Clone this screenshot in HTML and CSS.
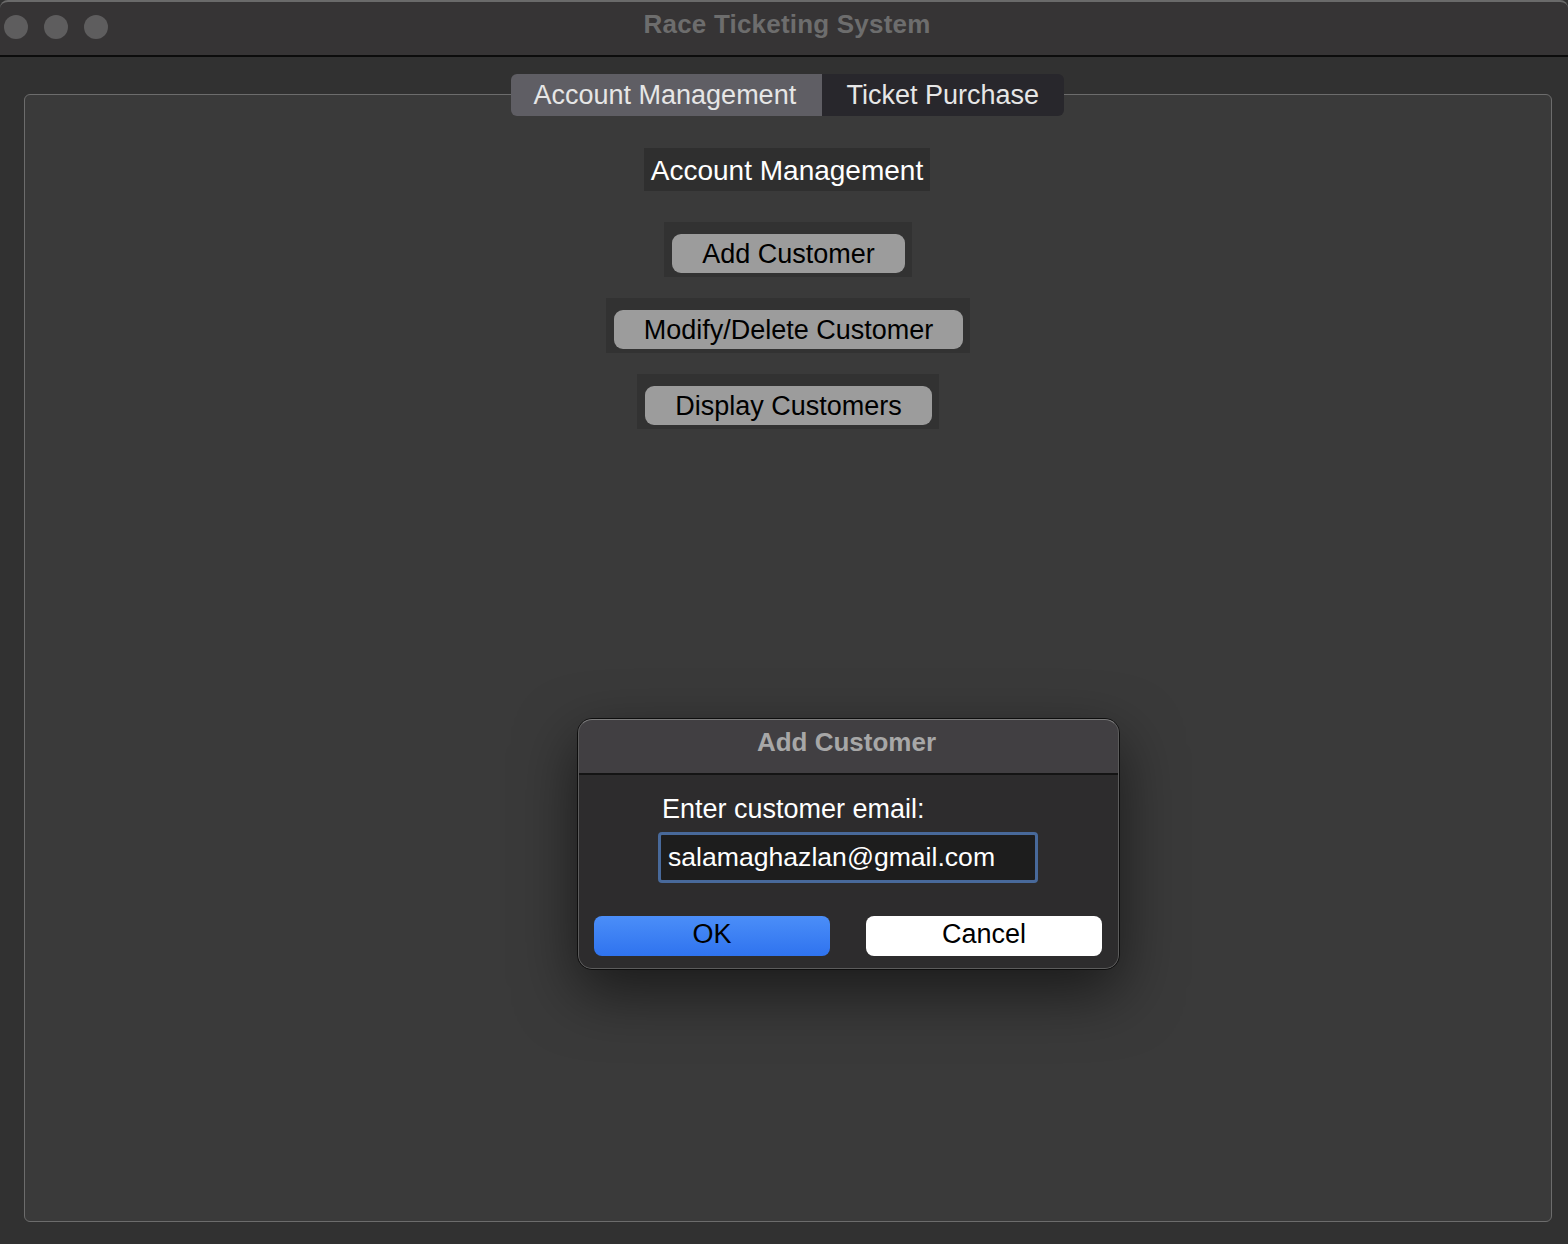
FILE: index.html
```html
<!DOCTYPE html>
<html>
<head>
<meta charset="utf-8">
<link rel="stylesheet" href="styles.css">
</head>
<body>
<div class="window">
  <header class="titlebar">
    <div class="lights"><span class="light"></span><span class="light"></span><span class="light"></span></div>
    <div class="title">Race Ticketing System</div>
  </header>
  <main class="content">
    <nav class="tabs">
      <div class="tab active">Account Management</div>
      <div class="tab">Ticket Purchase</div>
    </nav>
    <section class="group">
      <div class="heading">Account Management</div>
      <div class="btn-wrap first"><button class="btn">Add Customer</button></div>
      <div class="btn-wrap"><button class="btn">Modify/Delete Customer</button></div>
      <div class="btn-wrap"><button class="btn">Display Customers</button></div>
    </section>
  </main>
  <div class="dialog">
    <div class="dlg-title">Add Customer</div>
    <div class="dlg-body">
      <div class="dlg-label">Enter customer email:</div>
      <div class="dlg-input">salamaghazlan@gmail.com</div>
      <div class="dlg-buttons">
        <button class="dbtn ok">OK</button>
        <button class="dbtn cancel">Cancel</button>
      </div>
    </div>
  </div>
</div>
</body>
</html>
```
FILE: styles.css
```css
* { box-sizing: border-box; }
html, body { margin: 0; padding: 0; }
body {
  width: 1568px;
  height: 1244px;
  overflow: hidden;
  background: #313131;
  font-family: "Liberation Sans", Arial, sans-serif;
}
.window {
  position: relative;
  width: 1568px;
  height: 1244px;
  display: flex;
  flex-direction: column;
}
.titlebar {
  height: 57px;
  flex: none;
  background: #363435;
  border-top: 2px solid #6a6a6a;
  border-bottom: 2px solid #0c0c0c;
  border-radius: 8px 8px 0 0;
  position: relative;
  display: flex;
  align-items: center;
  justify-content: center;
}
.lights {
  position: absolute;
  left: 4px;
  top: 13px;
  display: flex;
  gap: 16px;
}
.light {
  width: 24px;
  height: 24px;
  border-radius: 50%;
  background: #5e5d5e;
}
.title {
  font-weight: bold;
  font-size: 26px;
  color: #6d6d6d;
  margin-top: -8px;
  margin-left: 6px;
  letter-spacing: 0.2px;
}
.content {
  flex: 1;
  display: flex;
  flex-direction: column;
  align-items: stretch;
  padding: 17px 16px 22px 24px;
}
.tabs {
  position: relative;
  z-index: 1;
  align-self: center;
  display: flex;
  height: 42px;
  margin-bottom: -22px;
  margin-left: -2px;
}
.tab {
  height: 42px;
  display: flex;
  align-items: center;
  font-size: 27px;
  color: #e6e6e6;
  background: #28272c;
  padding: 0 23px 0 25px;
  border-radius: 0 6px 6px 0;
}
.tab.active {
  background: #5f5e64;
  padding: 0 24px 0 23px;
  border-radius: 6px 0 0 6px;
  width: 311px;
}
.tab:not(.active) { width: 242px; }
.group {
  flex: 1;
  background: #3a3a3a;
  border: 1px solid #6c6c6c;
  border-radius: 6px;
  display: flex;
  flex-direction: column;
  align-items: center;
  padding-top: 53px;
}
.heading {
  background: #2f2f2f;
  color: #ffffff;
  font-size: 28px;
  height: 43px;
  padding: 3px 7px 0;
  display: flex;
  align-items: center;
  margin-left: -2px;
}
.btn-wrap {
  background: #323232;
  padding: 12px 7px 4px 8px;
  margin-top: 21px;
  height: 55px;
}
.btn-wrap.first { margin-top: 31px; }
.btn {
  display: block;
  height: 39px;
  border: none;
  border-radius: 9px;
  background: #9c9c9c;
  color: #000;
  font-family: "Liberation Sans", Arial, sans-serif;
  font-size: 27px;
  padding: 1px 30px 0;
  line-height: 38px;
}
.dialog {
  position: absolute;
  left: 577px;
  top: 718px;
  width: 543px;
  height: 252px;
  border-radius: 15px;
  border: 1px solid #0e0e0e;
  box-shadow: 0 22px 60px rgba(0,0,0,0.55);
  background: #2d2c2d;
  overflow: hidden;
  display: flex;
  flex-direction: column;
}
.dialog::after {
  content: "";
  position: absolute;
  inset: 0;
  border-radius: 14px;
  border: 1px solid #5c5c5c;
  border-top-color: #7c7c7c;
  pointer-events: none;
}
.dlg-title {
  height: 56px;
  flex: none;
  background: #413f42;
  border-bottom: 2px solid #141414;
  color: #a7a7a7;
  font-weight: bold;
  font-size: 26px;
  display: flex;
  align-items: center;
  justify-content: center;
  padding-bottom: 8px;
  padding-right: 4px;
}
.dlg-body {
  flex: 1;
  display: flex;
  flex-direction: column;
  padding: 19px 16px 13px 16px;
}
.dlg-label {
  color: #ffffff;
  font-size: 27px;
  margin-left: 68px;
  line-height: 30px;
}
.dlg-input {
  margin-top: 8px;
  margin-left: 64px;
  width: 380px;
  height: 51px;
  border: 3px solid #48699a;
  border-radius: 4px;
  background: #1d1d1d;
  color: #ffffff;
  font-size: 26.6px;
  padding-left: 7px;
  display: flex;
  align-items: center;
}
.dlg-buttons {
  margin-top: auto;
  display: flex;
  gap: 36px;
}
.dbtn {
  width: 236px;
  height: 40px;
  border: none;
  border-radius: 8px;
  font-family: "Liberation Sans", Arial, sans-serif;
  font-size: 27px;
  color: #000;
  padding: 0 0 3px;
}
.dbtn.ok { background: linear-gradient(#4b8ef8, #2f73ef); }
.dbtn.cancel { background: #ffffff; }
```
